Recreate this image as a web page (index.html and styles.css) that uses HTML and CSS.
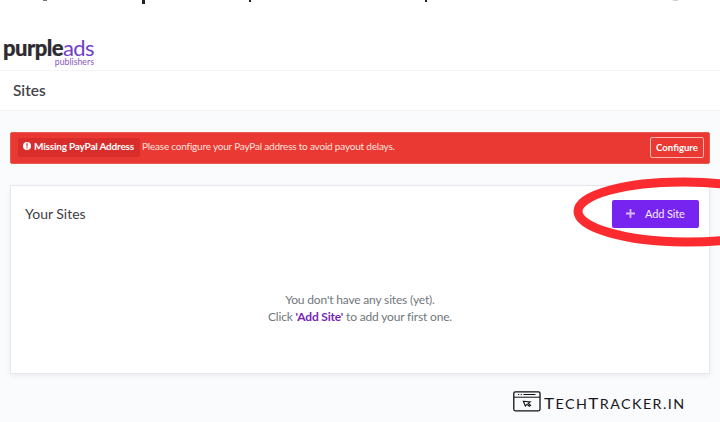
FILE: index.html
```html
<!DOCTYPE html>
<html lang="en">
<head>
<meta charset="utf-8">
<title>Sites</title>
<link rel="stylesheet" href="styles.css">
</head>
<body>
<svg class="clipped-line" width="720" height="6" viewBox="0 0 720 6" aria-hidden="true">
  <path d="M142 0h3v4h-3zM249 0h2v2h-2zM425 0h2v2h-2z" fill="#222"/>
  <path d="M43 0h4v1h-4z" fill="#777"/>
  <path d="M672 0h7l-2 1h-3z" fill="#ccc"/>
</svg>
<header class="brand">
  <div class="logo"><b>purple</b><span>ads</span></div>
  <div class="logo-sub">publishers</div>
</header>
<div class="title-bar"><h1>Sites</h1></div>
<main>
  <section class="alert">
    <div class="tag">
      <svg width="8" height="8" viewBox="0 0 8 8"><circle cx="4" cy="4" r="4" fill="#fff"/><path d="M3.3 1.3h1.4L4.5 4.6h-1zM3.4 5.2h1.2v1.2H3.4z" fill="#d92b2b"/></svg>
      <b>Missing PayPal Address</b>
    </div>
    <span class="message">Please configure your PayPal address to avoid payout delays.</span>
    <button class="configure">Configure</button>
  </section>
  <section class="card">
    <div class="card-head">
      <h2>Your Sites</h2>
      <button class="add"><svg width="9" height="9" viewBox="0 0 9 9"><path d="M4.5 0v9M0 4.5h9" stroke="#d9b8f7" stroke-width="1.8"/></svg><span>Add Site</span></button>
      <svg class="highlight" width="147" height="74" viewBox="0 0 147 74"><ellipse cx="112" cy="37" rx="107" ry="30" transform="rotate(.4 112 37)" fill="none" stroke="#fb2b2f" stroke-width="9"/></svg>
    </div>
    <div class="empty">
      <p class="line-one">You don't have any sites (yet).</p>
      <p class="line-two">Click <b>'Add Site'</b> to add your first one.</p>
    </div>
  </section>
</main>
<footer>
  <svg width="28" height="21" viewBox="0 0 28 21" fill="none" stroke="#111">
    <rect x=".8" y=".8" width="26.2" height="19" rx="1.5" stroke-width="1.3"/>
    <path d="M1 6.2h26" stroke-width="1"/>
    <path d="M5 3.5h1.2M7.7 3.5h1.2M10.5 3.5h12" stroke-width="1"/>
    <path d="M10.4 10.3l6.8.7-2 1.4 2.4 1.8-1.2 1-2.5-1.8-1.6 1.6z" stroke-width="1.1"/>
  </svg>
  <span class="mark"><i>T</i>ECH<i>T</i>RACKER.IN</span>
</footer>
</body>
</html>
```

FILE: styles.css
```css
* { box-sizing: border-box; }
body {
  margin: 0;
  width: 720px;
  height: 422px;
  overflow: hidden;
  background: #fafbfd;
  font-family: Lato, "Liberation Sans", sans-serif;
  color: #3e4045;
}
h1, h2, p { margin: 0; font-weight: 400; }
button { font-family: inherit; padding: 0; white-space: nowrap; }
.clipped-line { position: absolute; top: 0; left: 0; }
.brand {
  height: 71px;
  padding: 36px 0 0 3px;
  background: #fff;
  border-bottom: 1px solid #f5f5f6;
}
.logo {
  width: 92px;
  height: 21px;
  line-height: 24px;
  font-size: 22px;
  letter-spacing: -.55px;
  white-space: nowrap;
  color: #2d2b30;
}
.logo b { font-weight: 900; -webkit-text-stroke: .2px; }
.logo span { color: #7040c8; }
.logo-sub {
  width: 91px;
  line-height: 10px;
  font-size: 8.8px;
  text-align: right;
  color: #8d56c0;
}
.title-bar {
  height: 40px;
  padding-left: 13px;
  background: #fff;
  border-bottom: 1px solid #f3f4f6;
}
.title-bar h1 { font-size: 15.5px; line-height: 39px; font-weight: 500; -webkit-text-stroke: .1px; }
main { padding: 21px 10px 0; }
.alert {
  display: flex;
  align-items: center;
  height: 32px;
  padding: 0 5px 0 7px;
  background: #e93932;
  border: 1px solid #ed5650;
  border-radius: 2px;
  color: #fff;
  font-size: 10px;
  letter-spacing: -.2px;
  white-space: nowrap;
}
.tag {
  display: flex;
  align-items: center;
  gap: 3px;
  width: 122px;
  height: 19px;
  padding: 0 0 2px 5px;
  margin: 0 2px 2px 0;
  border-radius: 2px;
  background: #d92d2b;
}
.message { color: #ffe3df; margin-bottom: 4px; }
.configure {
  width: 54px;
  height: 21px;
  margin: 0 0 2px auto;
  border: 1px solid #ffb5b0;
  border-radius: 2px;
  background: none;
  color: #fff;
  font-size: 9.6px;
  font-weight: 700;
}
.card {
  height: 189px;
  margin-top: 21px;
  background: #fff;
  border: 1px solid #e6e8ec;
  box-shadow: 0 2px 5px rgba(40, 50, 80, .07);
}
.card-head {
  position: relative;
  display: flex;
  justify-content: space-between;
  align-items: center;
  height: 55px;
  padding: 0 10px 0 14px;
}
.card-head h2 { font-size: 14px; padding-bottom: 1px; }
.add {
  display: flex;
  align-items: center;
  gap: 10px;
  width: 87px;
  height: 28px;
  padding-left: 14px;
  border: 0;
  border-radius: 2px;
  background: #7724f0;
  color: #f7ebff;
  font-size: 11px;
  letter-spacing: -.12px;
}
.highlight { position: absolute; left: 562px; top: -11px; }
.empty {
  padding-top: 50px;
  text-align: center;
  font-size: 12px;
  letter-spacing: -.17px;
  line-height: 17px;
  color: #71777d;
}
.empty b { color: #7a1fb4; }
footer {
  display: flex;
  align-items: flex-start;
  gap: 3px;
  padding: 17px 0 0 513px;
  color: #17181b;
}
.mark {
  height: 22px;
  line-height: 24px;
  font-size: 13px;
  letter-spacing: 1.3px;
  white-space: nowrap;
  transform: scaleX(1.1);
  transform-origin: left;
}
.mark i { font-style: normal; font-size: 15.5px; }
```
